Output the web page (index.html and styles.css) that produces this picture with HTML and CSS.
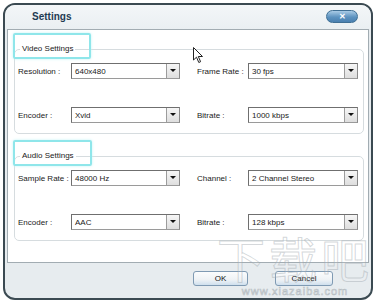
FILE: index.html
```html
<!DOCTYPE html>
<html lang="en">
<head>
    <meta charset="UTF-8">
    <title>Settings</title>
    <link rel="stylesheet" href="styles.css">
</head>
<body>
    <div class="window">
        <div class="titlebar">
            <span class="title">Settings</span>
            <span class="close">&#x2715;</span>
        </div>

        <div class="panel">
            <fieldset class="group">
                <legend class="hl">Video Settings</legend>
                <div class="fields">
                    <span class="lbl">Resolution :</span>
                    <div class="combo"><span>640x480</span><i class="arrow"></i></div>
                    <span class="lbl right">Frame Rate :</span>
                    <div class="combo"><span>30 fps</span><i class="arrow"></i></div>

                    <span class="lbl">Encoder :</span>
                    <div class="combo"><span>Xvid</span><i class="arrow"></i></div>
                    <span class="lbl right">Bitrate :</span>
                    <div class="combo"><span>1000 kbps</span><i class="arrow"></i></div>
                </div>
            </fieldset>

            <fieldset class="group audio">
                <legend class="hl">Audio Settings</legend>
                <div class="fields">
                    <span class="lbl">Sample Rate :</span>
                    <div class="combo"><span>48000 Hz</span><i class="arrow"></i></div>
                    <span class="lbl right">Channel :</span>
                    <div class="combo"><span>2 Channel Stereo</span><i class="arrow"></i></div>

                    <span class="lbl">Encoder :</span>
                    <div class="combo"><span>AAC</span><i class="arrow"></i></div>
                    <span class="lbl right">Bitrate :</span>
                    <div class="combo"><span>128 kbps</span><i class="arrow"></i></div>
                </div>
            </fieldset>
        </div>

        <div class="footer">
            <button class="btn ok">OK</button>
            <button class="btn cancel">Cancel</button>
        </div>

        <!-- watermark + mouse pointer sit over the dialog -->
        <div class="watermark">
            <span class="wm-big">下载吧</span>
            <span class="wm-url">www.xiazaiba.com</span>
        </div>
        <svg class="cursor" width="11" height="17" viewBox="0 0 11 17">
            <path d="M0.5 0.5 L0.5 13 L3.5 10.2 L5.8 15.5 L7.6 14.7 L5.3 9.5 L9.5 9.5 Z" fill="#fff" stroke="#222" stroke-width="1"/>
        </svg>
    </div>
</body>
</html>
```

FILE: styles.css
```css
body {
    margin: 0;
    background: #fff;
    font-family: "Liberation Sans", Arial, sans-serif;
    font-size: 8px;
    color: #1a1a1a;
}

.window {
    position: relative;
    box-sizing: border-box;
    width: 370px;
    height: 297px;
    margin: 3px 0 0 3px;
    border: 2px solid #3b4a52;
    border-radius: 12px;
    background: #e7ecef;
    overflow: hidden;
}

/* title bar */
.titlebar {
    height: 24px;
    display: flex;
    align-items: center;
    justify-content: space-between;
    padding: 0 13px 0 27px;
    background: linear-gradient(#f3f6f8, #eaeff2);
}
.title {
    font-size: 10px;
    font-weight: bold;
    color: #1f3b52;
    margin-top: -2px;
}
.close {
    width: 32px;
    height: 13px;
    border-radius: 7px;
    border: 1px solid #3f6f94;
    box-sizing: border-box;
    background: linear-gradient(#a9cbe6, #5d93c0 55%, #4a80b0);
    color: #fff;
    font-size: 8px;
    font-weight: bold;
    line-height: 11px;
    text-align: center;
    margin-top: -1px;
}

/* white content area */
.panel {
    margin: 0 2px;
    padding: 14px 4px 21px 6px;
    background: #fff;
    border: 1px solid #a2acb2;
}

.group {
    margin: 0;
    padding: 9px 4px 10px 3px;
    border: 1px solid #d6dcdf;
    border-radius: 5px;
    min-width: 0;
}
.group.audio {
    margin-top: 17px;
}
.group legend {
    padding: 0 2px;
    margin-left: 2px;
    line-height: 10px;
    font-size: 8px;
    color: #1a1a1a;
}

/* cyan annotation box around the section titles */
.hl {
    position: relative;
}
.hl::before {
    content: "";
    position: absolute;
    left: -7px;
    top: -11px;
    right: -16px;
    bottom: -5px;
    border: 2px solid #8fe6ea;
    border-radius: 2px;
    box-shadow: 0 0 3px #c3f3f5;
}

.fields {
    display: grid;
    grid-template-columns: 53px 109px 68px 110px;
    grid-auto-rows: 16px;
    row-gap: 28px;
    align-items: center;
}
.lbl {
    white-space: nowrap;
}
.lbl.right {
    padding-left: 17px;
}

.combo {
    box-sizing: border-box;
    height: 16px;
    display: flex;
    align-items: center;
    border: 1px solid #6f6f6f;
    border-right-color: #8a8a8a;
    border-bottom-color: #9a9a9a;
    background: #fff;
}
.combo span {
    flex: 1;
    padding-left: 3px;
    white-space: nowrap;
}
.arrow {
    position: relative;
    width: 12px;
    height: 14px;
    border-left: 1px solid #9c9c9c;
    background: linear-gradient(#f6f6f6, #dedede);
}
.arrow::after {
    content: "";
    position: absolute;
    left: 3px;
    top: 5px;
    border-left: 3px solid transparent;
    border-right: 3px solid transparent;
    border-top: 3px solid #111;
}

/* bottom buttons */
.footer {
    display: flex;
    justify-content: flex-end;
    gap: 27px;
    padding: 8px 38px 0 0;
}
.btn {
    height: 15px;
    padding: 0;
    font-family: "Liberation Sans", Arial, sans-serif;
    font-size: 8px;
    color: #111;
    border: 1px solid #7f9ab3;
    border-radius: 3px;
    background: linear-gradient(#fbfcfd, #eef2f5 60%, #cfe0ee);
}
.ok {
    width: 55px;
}
.cancel {
    width: 58px;
}

.watermark {
    position: absolute;
    left: 212px;
    top: 224px;
    display: flex;
    flex-direction: column;
    align-items: center;
    white-space: nowrap;
    pointer-events: none;
}
.wm-big {
    font-family: "Noto Sans CJK SC", sans-serif;
    font-size: 48px;
    line-height: 56px;
    letter-spacing: 4px;
    color: rgba(255, 255, 255, 0.1);
    -webkit-text-stroke: 1px rgba(160, 168, 174, 0.45);
}
.wm-url {
    font-family: "Liberation Sans", Arial, sans-serif;
    font-size: 11px;
    line-height: 12px;
    letter-spacing: 1px;
    color: transparent;
    -webkit-text-stroke: 0.6px rgba(150, 158, 164, 0.6);
}

.cursor {
    position: absolute;
    left: 188px;
    top: 42px;
}
```
